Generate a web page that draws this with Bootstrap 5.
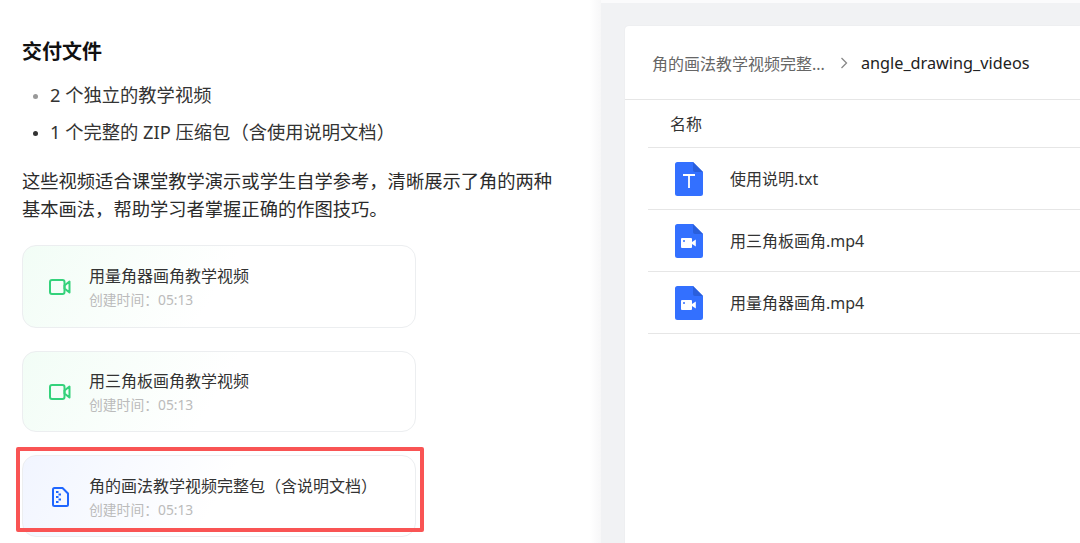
<!doctype html>
<html lang="zh">
<head>
<meta charset="utf-8">
<title>交付文件</title>
<link href="https://cdn.jsdelivr.net/npm/bootstrap@5.3.0/dist/css/bootstrap.min.css" rel="stylesheet">
<style>
html,body{height:543px;overflow:hidden;background:#fff}
body{font-family:"Noto Sans","Noto Sans CJK SC",sans-serif;color:#1f2329}
.page-wrap{height:543px;width:1080px;overflow:hidden}
.left-pane{width:590px;flex:none;padding:37px 22px 0 22px;position:relative}
.pane-gutter{width:11px;flex:none;background:linear-gradient(90deg,#fff,#f7f7f8)}
.right-pane{flex:1;background:#f1f2f4;padding:23px 0 0 24px;border-top:3px solid #fbfbfc}
.heading-txt{font-size:20px;font-weight:700;line-height:30px;color:#111;margin:0 0 14px}
.bullets{font-size:18.3px;line-height:28px;margin:0 0 21px;padding-left:28px;color:#333}
.bullets li{margin-bottom:9px}
.bullets li::marker{font-size:14px}
.bullets li:first-child::marker{color:#999}
.para{font-size:18.3px;line-height:28px;color:#2b2b2b;margin:0 0 22px;width:540px}
.file-cards{width:394px;display:flex;flex-direction:column;gap:23px}
.file-tile{height:82px;border:1px solid #eceef0;border-radius:14px;padding:1px 0 0 26px;gap:18px;background:linear-gradient(120deg,#f2fdf6,#fff 50%)}
.file-tile:nth-child(1){height:83px}
.file-tile:nth-child(2){height:81px;padding-top:0}
.file-tile.blue-tint{background:linear-gradient(120deg,#f1f5ff,#fff 50%)}
.tile-icon{width:22px;flex:none;display:flex;justify-content:center}
.tile-name{font-size:16px;line-height:24px;color:#333;white-space:nowrap}
.tile-time{font-size:13.8px;line-height:20px;color:#bbb;margin-top:2px}
.red-outline{position:absolute;left:16px;top:447px;width:408px;height:85px;border:4px solid #f95454;border-radius:2px;pointer-events:none}
.drive-panel{background:#fff;height:600px;border-radius:4px 0 0 0;box-shadow:0 0 2px rgba(0,0,0,.06)}
.crumb-bar{height:74px;padding:2px 0 0 27px;border-bottom:1px solid #e6e6e6;font-size:16px}
.crumb-root{color:#666}
.crumb-sep{margin:0 13px 2px 15px}
.crumb-leaf{font-size:16.25px;color:#222}
.list-area{padding-left:23px}
.list-head{height:48px;padding-left:22px;font-size:16px;color:#333;border-bottom:1px solid #e6e6e6}
.list-line{height:62px;padding-left:27px;gap:27px;font-size:16px;color:#333;border-bottom:1px solid #e6e6e6}
</style>
</head>
<body>
<div class="page-wrap d-flex">
  <div class="left-pane">
    <h5 class="heading-txt">交付文件</h5>
    <ul class="bullets">
      <li>2 个独立的教学视频</li>
      <li>1 个完整的 ZIP 压缩包（含使用说明文档）</li>
    </ul>
    <p class="para">这些视频适合课堂教学演示或学生自学参考，清晰展示了角的两种基本画法，帮助学习者掌握正确的作图技巧。</p>
    <div class="file-cards">
      <div class="file-tile d-flex align-items-center">
        <div class="tile-icon"><svg width="22" height="16" viewBox="0 0 22 16" fill="none" stroke="#34d27b" stroke-width="2" stroke-linejoin="round"><rect x="1" y="1" width="14.5" height="14" rx="2"/><path d="M15.500 6.500 20.500 2.500V13.500L15.500 9.500Z"/></svg></div>
        <div><div class="tile-name">用量角器画角教学视频</div><div class="tile-time">创建时间：05:13</div></div>
      </div>
      <div class="file-tile d-flex align-items-center">
        <div class="tile-icon"><svg width="22" height="16" viewBox="0 0 22 16" fill="none" stroke="#34d27b" stroke-width="2" stroke-linejoin="round"><rect x="1" y="1" width="14.5" height="14" rx="2"/><path d="M15.500 6.500 20.500 2.500V13.500L15.500 9.500Z"/></svg></div>
        <div><div class="tile-name">用三角板画角教学视频</div><div class="tile-time">创建时间：05:13</div></div>
      </div>
      <div class="file-tile blue-tint d-flex align-items-center">
        <div class="tile-icon"><svg width="17" height="20" viewBox="0 0 17 20" fill="none"><path d="M2.500 1H10.500L16 6.500V17.500A1.500 1.500 0 0 1 14.500 19H2.500A1.500 1.500 0 0 1 1 17.500V2.500A1.500 1.500 0 0 1 2.500 1Z" stroke="#1f66ff" stroke-width="2" stroke-linejoin="round"/><path d="M4 4h2.500v2H4zM6.500 6.500H9v2H6.500zM4 9h2.500v2H4zM6.500 11.500H9v2H6.500zM4 14h2.500v2H4z" fill="#1f66ff"/></svg></div>
        <div><div class="tile-name">角的画法教学视频完整包（含说明文档）</div><div class="tile-time">创建时间：05:13</div></div>
      </div>
    </div>
    <div class="red-outline"></div>
  </div>
  <div class="pane-gutter"></div>
  <div class="right-pane">
    <div class="drive-panel">
      <div class="crumb-bar d-flex align-items-center">
        <span class="crumb-root">角的画法教学视频完整...</span>
        <svg class="crumb-sep" width="8" height="12" viewBox="0 0 8 12" fill="none" stroke="#888" stroke-width="1.3"><path d="M1.500 1 6.500 6 1.500 11"/></svg>
        <span class="crumb-leaf">angle_drawing_videos</span>
      </div>
      <div class="list-area">
        <div class="list-head d-flex align-items-center">名称</div>
        <div class="list-line d-flex align-items-center">
          <svg width="28" height="34" viewBox="0 0 28 34"><path d="M2.500 0H18L28 10V31.500A2.500 2.500 0 0 1 25.500 34H2.500A2.500 2.500 0 0 1 0 31.500V2.500A2.500 2.500 0 0 1 2.500 0Z" fill="#3370ff"/><path d="M18 0 28 10H20A2 2 0 0 1 18 8Z" fill="#2a5fdc"/><path d="M8 13H20M14 13V26" stroke="#fff" stroke-width="1.8" fill="none"/></svg>
          <span>使用说明.txt</span>
        </div>
        <div class="list-line d-flex align-items-center">
          <svg width="28" height="34" viewBox="0 0 28 34"><path d="M2.500 0H18L28 10V31.500A2.500 2.500 0 0 1 25.500 34H2.500A2.500 2.500 0 0 1 0 31.500V2.500A2.500 2.500 0 0 1 2.500 0Z" fill="#3370ff"/><path d="M18 0 28 10H20A2 2 0 0 1 18 8Z" fill="#2a5fdc"/><rect x="6" y="14" width="11" height="10" rx="1" fill="#fff"/><path d="M17 18 20.800 15.500V22.500L17 20Z" fill="#fff"/><circle cx="9" cy="17" r="1" fill="#3370ff"/></svg>
          <span>用三角板画角.mp4</span>
        </div>
        <div class="list-line d-flex align-items-center">
          <svg width="28" height="34" viewBox="0 0 28 34"><path d="M2.500 0H18L28 10V31.500A2.500 2.500 0 0 1 25.500 34H2.500A2.500 2.500 0 0 1 0 31.500V2.500A2.500 2.500 0 0 1 2.500 0Z" fill="#3370ff"/><path d="M18 0 28 10H20A2 2 0 0 1 18 8Z" fill="#2a5fdc"/><rect x="6" y="14" width="11" height="10" rx="1" fill="#fff"/><path d="M17 18 20.800 15.500V22.500L17 20Z" fill="#fff"/><circle cx="9" cy="17" r="1" fill="#3370ff"/></svg>
          <span>用量角器画角.mp4</span>
        </div>
      </div>
    </div>
  </div>
</div>
<script src="https://cdn.jsdelivr.net/npm/bootstrap@5.3.0/dist/js/bootstrap.bundle.min.js"></script>
</body>
</html>
